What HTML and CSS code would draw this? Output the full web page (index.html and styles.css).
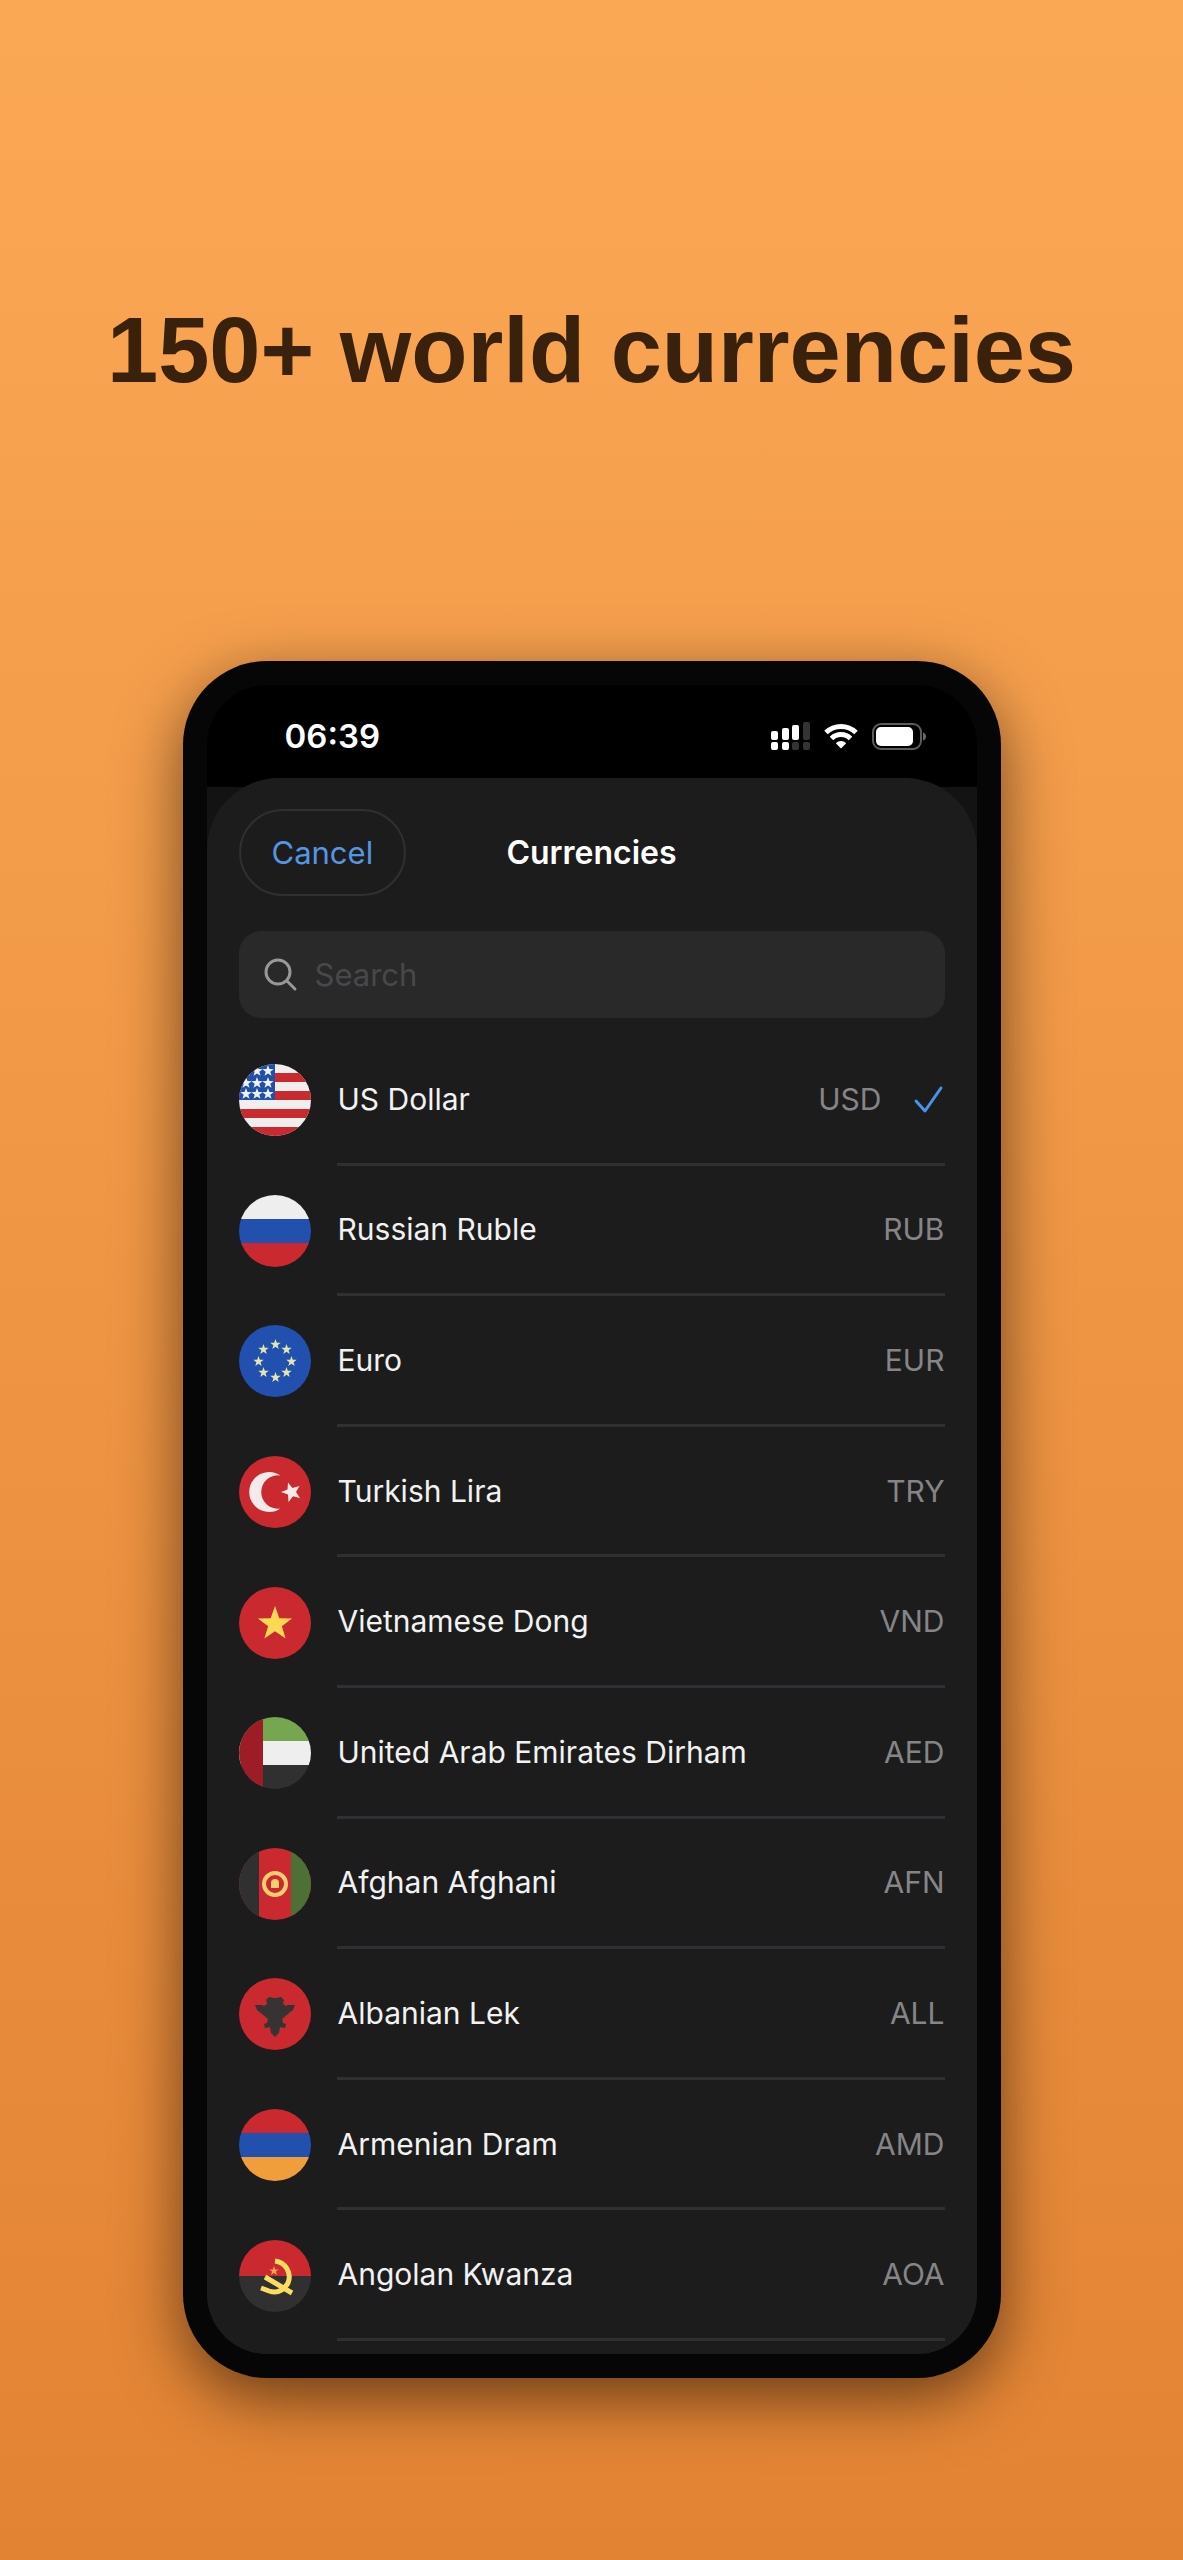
FILE: index.html
```
<!DOCTYPE html>
<html lang="en">
<head>
    <meta charset="UTF-8">
    <meta name="viewport" content="width=device-width, initial-scale=1.0">
    <title>150+ world currencies</title>
    <link rel="stylesheet" href="styles.css">
</head>
<body>
    <svg class="defs" aria-hidden="true">
        <symbol id="star" viewBox="-10 -10 20 20">
            <path d="M0-10 2.4-3.2 9.5-3.1 3.8 1.2 5.9 8.1 0 4-5.9 8.1-3.8 1.2-9.5-3.1-2.4-3.2Z"/>
        </symbol>
    </svg>

    <main class="page">
        <h1>150+ world currencies</h1>

        <div class="phone">
            <div class="screen">
                <div class="status-bar">
                    <time class="clock">06:39</time>
                    <div class="status-icons">
                        <!-- signal -->
                        <svg width="39" height="28" viewBox="0 0 39 28" fill="#fff" aria-hidden="true">
                            <rect x="0" y="9" width="7" height="9" rx="2"/>
                            <rect x="11" y="6" width="7" height="12" rx="2"/>
                            <rect x="21" y="3" width="7" height="15" rx="2"/>
                            <rect x="32" y="0" width="7" height="18" rx="2" fill="#333"/>
                            <rect x="0" y="20" width="7" height="8" rx="2"/>
                            <rect x="11" y="20" width="7" height="8" rx="2"/>
                            <rect x="21" y="20" width="7" height="8" rx="2" fill="#333"/>
                            <rect x="32" y="20" width="7" height="8" rx="2" fill="#333"/>
                        </svg>
                        <!-- wifi -->
                        <svg width="34" height="26" viewBox="0 0 34 26" fill="none" stroke="#fff" stroke-width="5" aria-hidden="true">
                            <path d="M2 9.500a21.500 21.500 0 0 1 30 0"/>
                            <path d="M7.500 15.500a13.500 13.500 0 0 1 19 0"/>
                            <path d="M17 25.500 11.800 20.200a7.500 7.500 0 0 1 10.400 0Z" fill="#fff" stroke="none"/>
                        </svg>
                        <!-- battery -->
                        <svg width="55" height="27" viewBox="0 0 55 27" aria-hidden="true">
                            <rect x="1" y="1" width="48" height="25" rx="8" fill="none" stroke="#5c5c5c" stroke-width="2"/>
                            <rect x="4" y="4" width="37" height="19" rx="5" fill="#fff"/>
                            <path d="M51 9.500q3 1 3 4t-3 4Z" fill="#6a6a6a"/>
                        </svg>
                    </div>
                </div>

                <div class="backdrop">
                    <section class="sheet">
                        <header class="sheet-header">
                            <button type="button" class="cancel-btn">Cancel</button>
                            <h2>Currencies</h2>
                        </header>

                        <label class="search">
                            <svg width="34" height="34" viewBox="0 0 34 34" fill="none" stroke="#98989c" stroke-width="3" stroke-linecap="round" role="img" aria-label="Search">
                                <circle cx="14" cy="14" r="12"/>
                                <path d="M23 23 31 31"/>
                            </svg>
                            <input type="search" placeholder="Search">
                        </label>

                        <ul class="currency-list">
                            <li class="currency">
                                <svg class="flag" viewBox="0 0 72 72" aria-hidden="true">
                                    <rect width="72" height="72" fill="#f1eeee"/>
                                    <path d="M0 9h72v9H0zM0 27h72v9H0zM0 45h72v9H0zM0 63h72v9H0z" fill="#c9292f"/>
                                    <rect width="36" height="36" fill="#2250a6"/>
                                    <g fill="#eef3fa">
                                        <use href="#star" x="1" y="1" width="12" height="12"/>
                                        <use href="#star" x="12" y="1" width="12" height="12"/>
                                        <use href="#star" x="23" y="1" width="12" height="12"/>
                                        <use href="#star" x="1" y="13" width="12" height="12"/>
                                        <use href="#star" x="12" y="13" width="12" height="12"/>
                                        <use href="#star" x="23" y="13" width="12" height="12"/>
                                        <use href="#star" x="1" y="24" width="12" height="12"/>
                                        <use href="#star" x="12" y="24" width="12" height="12"/>
                                        <use href="#star" x="23" y="24" width="12" height="12"/>
                                    </g>
                                </svg>
                                <div class="details">
                                    <span class="name">US Dollar</span>
                                    <span class="code">USD</span>
                                    <svg class="check" width="34" height="34" viewBox="0 0 34 34" fill="none" stroke="#4795ea" stroke-width="3" stroke-linecap="round" stroke-linejoin="round" role="img" aria-label="Selected">
                                        <path d="M5 19 14 29 30 6"/>
                                    </svg>
                                </div>
                            </li>
                            <li class="currency">
                                <svg class="flag" viewBox="0 0 72 72" aria-hidden="true">
                                    <rect width="72" height="24" fill="#eee"/>
                                    <rect y="24" width="72" height="24" fill="#2250ae"/>
                                    <rect y="48" width="72" height="24" fill="#c9292f"/>
                                </svg>
                                <div class="details">
                                    <span class="name">Russian Ruble</span>
                                    <span class="code">RUB</span>
                                </div>
                            </li>
                            <li class="currency">
                                <svg class="flag" viewBox="0 0 72 72" aria-hidden="true">
                                    <rect width="72" height="72" fill="#2250ae"/>
                                    <g fill="#e3e6ae">
                                        <use href="#star" x="31" y="14" width="11" height="11"/>
                                        <use href="#star" x="42" y="19" width="11" height="11"/>
                                        <use href="#star" x="47" y="31" width="11" height="11"/>
                                        <use href="#star" x="42" y="42" width="11" height="11"/>
                                        <use href="#star" x="31" y="47" width="11" height="11"/>
                                        <use href="#star" x="19" y="42" width="11" height="11"/>
                                        <use href="#star" x="14" y="31" width="11" height="11"/>
                                        <use href="#star" x="19" y="19" width="11" height="11"/>
                                    </g>
                                </svg>
                                <div class="details">
                                    <span class="name">Euro</span>
                                    <span class="code">EUR</span>
                                </div>
                            </li>
                            <li class="currency">
                                <svg class="flag" viewBox="0 0 72 72" aria-hidden="true">
                                    <rect width="72" height="72" fill="#c9292f"/>
                                    <path d="M41.500 19.500A20 20 0 1 0 41.500 52.500A16.700 16.700 0 1 1 41.500 19.500Z" fill="#f3eaea"/>
                                    <path d="M42 36 48.500 33.600 49 26.500 53.400 32 60.500 30 57 36 61 42 54 40.200 49.500 46 49 38.600Z" fill="#f3eaea"/>
                                </svg>
                                <div class="details">
                                    <span class="name">Turkish Lira</span>
                                    <span class="code">TRY</span>
                                </div>
                            </li>
                            <li class="currency">
                                <svg class="flag" viewBox="0 0 72 72" aria-hidden="true">
                                    <rect width="72" height="72" fill="#c9292f"/>
                                    <use href="#star" x="18" y="19" width="36" height="36" fill="#fcd955"/>
                                </svg>
                                <div class="details">
                                    <span class="name">Vietnamese Dong</span>
                                    <span class="code">VND</span>
                                </div>
                            </li>
                            <li class="currency">
                                <svg class="flag" viewBox="0 0 72 72" aria-hidden="true">
                                    <rect width="72" height="24" fill="#76a650"/>
                                    <rect y="24" width="72" height="24" fill="#eee"/>
                                    <rect y="48" width="72" height="24" fill="#303030"/>
                                    <rect width="24" height="72" fill="#9c1d25"/>
                                </svg>
                                <div class="details">
                                    <span class="name">United Arab Emirates Dirham</span>
                                    <span class="code">AED</span>
                                </div>
                            </li>
                            <li class="currency">
                                <svg class="flag" viewBox="0 0 72 72" aria-hidden="true">
                                    <rect width="72" height="72" fill="#c9292f"/>
                                    <rect width="20" height="72" fill="#303030"/>
                                    <rect x="52" width="20" height="72" fill="#4c7036"/>
                                    <circle cx="36" cy="36" r="11" fill="none" stroke="#fbcf6e" stroke-width="4"/>
                                    <path d="M32 40v-5a4 4 0 0 1 8 0v5Z" fill="#fbcf6e"/>
                                </svg>
                                <div class="details">
                                    <span class="name">Afghan Afghani</span>
                                    <span class="code">AFN</span>
                                </div>
                            </li>
                            <li class="currency">
                                <svg class="flag" viewBox="0 0 72 72" aria-hidden="true">
                                    <rect width="72" height="72" fill="#c9292f"/>
                                    <path d="M27 22 30 19 35 20H37L42 19 45 22 44 26 47 28 49 27H56L54 32 49 36 43 41 44 45 47 46 46 50 41 49 40 55 36 59 32 55 31 49 26 50 25 46 28 45 29 41 23 36 18 32 16 27H23L25 28 28 26Z" fill="#363432"/>
                                </svg>
                                <div class="details">
                                    <span class="name">Albanian Lek</span>
                                    <span class="code">ALL</span>
                                </div>
                            </li>
                            <li class="currency">
                                <svg class="flag" viewBox="0 0 72 72" aria-hidden="true">
                                    <rect width="72" height="24" fill="#c9292f"/>
                                    <rect y="24" width="72" height="24" fill="#2250ae"/>
                                    <rect y="48" width="72" height="24" fill="#f09e3c"/>
                                </svg>
                                <div class="details">
                                    <span class="name">Armenian Dram</span>
                                    <span class="code">AMD</span>
                                </div>
                            </li>
                            <li class="currency">
                                <svg class="flag" viewBox="0 0 72 72" aria-hidden="true">
                                    <rect width="72" height="36" fill="#c9292f"/>
                                    <rect y="36" width="72" height="36" fill="#303030"/>
                                    <g fill="none" stroke="#fbdc62" stroke-width="5">
                                        <path d="M36 21A16 16 0 0 1 49 43Q42 55 30 51L22 48"/>
                                        <path d="M26 37 53 53"/>
                                    </g>
                                    <use href="#star" x="30" y="26" width="10" height="10" fill="#f5a04c"/>
                                </svg>
                                <div class="details">
                                    <span class="name">Angolan Kwanza</span>
                                    <span class="code">AOA</span>
                                </div>
                            </li>
                        </ul>
                    </section>
                </div>
            </div>
        </div>
    </main>
</body>
</html>
```
FILE: styles.css
```
:root {
    --bezel-color: #060607;
    --sheet-color: #1c1c1d;
    --field-color: #29292a;
    --line-color: #303034;
    --text-color: #f2f2f2;
    --text-secondary: #858587;
    --accent-color: #5596e2;
}

* {
    margin: 0;
    padding: 0;
    box-sizing: border-box;
}

body {
    font-family: Inter, "Liberation Sans", sans-serif;
    color: var(--text-color);
    background: linear-gradient(#fba855, #e28333);
    min-height: 100vh;
}

.defs {
    display: none;
}

.page {
    display: flex;
    flex-direction: column;
    align-items: center;
    padding: 298px 24px 182px;
}

h1 {
    font-family: "Liberation Sans", Arial, sans-serif;
    font-size: 92px;
    line-height: 104px;
    color: #3a210c;
    text-align: center;
    margin-bottom: 259px;
}

/* phone */
.phone {
    display: flex;
    width: 100%;
    max-width: 818px;
    aspect-ratio: 818 / 1717;
    padding: 24px;
    background-color: var(--bezel-color);
    border-radius: 84px;
    box-shadow: 0 20px 64px rgba(0, 0, 0, 0.55);
}

.screen {
    flex: 1;
    display: flex;
    flex-direction: column;
    overflow: hidden;
    background-color: #000;
    border-radius: 60px;
}

.status-bar {
    display: flex;
    align-items: center;
    justify-content: space-between;
    height: 102px;
    padding: 0 50px 0 78px;
}

.clock {
    font-size: 33px;
    font-weight: 600;
    color: #fff;
}

.status-icons {
    display: flex;
    align-items: center;
    gap: 14px;
}

/* sheet */
.backdrop {
    flex: 1;
    display: flex;
    background-color: #131314;
}

.sheet {
    flex: 1;
    display: flex;
    flex-direction: column;
    margin-top: -9px;
    padding: 31px 32px 13px;
    background-color: var(--sheet-color);
    border-radius: 72px 72px 0 0;
}

.sheet-header {
    display: grid;
    grid-template-columns: 1fr auto 1fr;
    align-items: center;
    margin-bottom: 35px;
}

.cancel-btn {
    justify-self: start;
    height: 87px;
    padding: 0 31px;
    font-family: inherit;
    font-size: 31px;
    color: var(--accent-color);
    background: none;
    border: 2px solid #303032;
    border-radius: 44px;
    cursor: pointer;
}

h2 {
    font-size: 32px;
    font-weight: 600;
    color: #fff;
}

.search {
    display: flex;
    align-items: center;
    gap: 17px;
    height: 87px;
    padding: 0 25px;
    background-color: var(--field-color);
    border-radius: 22px;
}

.search input {
    flex: 1;
    min-width: 0;
    font-family: inherit;
    font-size: 31px;
    color: var(--text-color);
    background: none;
    border: none;
    outline: none;
}

.search input::placeholder {
    color: #48484a;
}

/* currency list */
.currency-list {
    flex: 1;
    display: flex;
    flex-direction: column;
    margin-top: 17px;
    list-style: none;
}

.currency {
    flex: 1;
    display: flex;
    align-items: center;
    gap: 26px;
}

.flag {
    width: 72px;
    height: 72px;
    border-radius: 50%;
}

.details {
    flex: 1;
    align-self: stretch;
    display: flex;
    align-items: center;
    padding-left: 1px;
    border-bottom: 3px solid var(--line-color);
}

.name {
    flex: 1;
    font-size: 30px;
}

.code {
    font-size: 30px;
    color: var(--text-secondary);
}

.check {
    margin-left: 29px;
}
```
